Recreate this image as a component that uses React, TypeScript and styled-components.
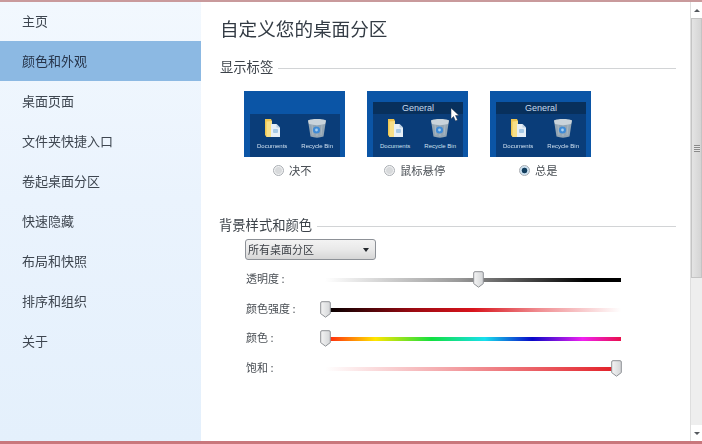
import React from "react";
import styled, { createGlobalStyle } from "styled-components";

const GlobalStyle = createGlobalStyle`
  html, body {
    margin: 0;
    padding: 0;
    background: #ffffff;
  }
  body {
    font-family: "Noto Sans CJK SC", "Liberation Sans", sans-serif;
    overflow: hidden;
  }
`;

// Whole window, with the reddish frame lines on top and bottom
const Window = styled.div`
  width: 702px;
  height: 444px;
  display: flex;
  flex-direction: column;
  overflow: hidden;
  border-top: 2px solid #c99a9c;
  border-bottom: 3px solid #c9777c;
  box-sizing: border-box;
  filter: blur(0.45px);
`;

const Body = styled.div`
  flex: 1;
  min-height: 0;
  display: flex;
`;

// Left navigation
const Sidebar = styled.nav`
  width: 201px;
  flex-shrink: 0;
  display: flex;
  flex-direction: column;
  background: linear-gradient(180deg, #f2f8fe 0%, #eaf3fd 45%, #e4f0fc 100%);
`;

const NavItem = styled.div<{ $active?: boolean }>`
  height: 40.1px;
  box-sizing: border-box;
  padding: 0 0 2px 22px;
  display: flex;
  align-items: center;
  font-size: 13px;
  color: ${(p) => (p.$active ? "#26344a" : "#3e4650")};
  background: ${(p) => (p.$active ? "#8cb9e3" : "transparent")};
  &:first-child {
    height: 39px;
    padding-bottom: 3px;
  }
`;

const Main = styled.main`
  flex: 1;
  min-width: 0;
  padding: 13px 14px 0 19px;
  display: flex;
  flex-direction: column;
`;

const Title = styled.h1`
  margin: 0;
  font-size: 18.6px;
  line-height: 25px;
  font-weight: 400;
  color: #333b44;
`;

const SectionHeading = styled.div<{ $top: number; $shift?: number }>`
  margin: ${(p) => p.$top}px 0 0 ${(p) => p.$shift ?? 0}px;
  display: flex;
  align-items: center;
  gap: 5px;
  font-size: 13.3px;
  line-height: 18px;
  color: #3c4249;
  &::after {
    content: "";
    flex: 1;
    height: 1px;
    margin-top: 3px;
    background: #d2d4d6;
  }
`;

const Previews = styled.div`
  margin: 15px 0 0 24px;
  display: flex;
  gap: 22px;
`;

const PreviewColumn = styled.div`
  width: 101px;
  display: flex;
  flex-direction: column;
`;

const Preview = styled.div`
  position: relative;
  height: 66px;
  box-sizing: border-box;
  padding: 11px 5px 0 6px;
  background: #0b55a6;
  display: flex;
  flex-direction: column;
  justify-content: flex-end;
`;

const Pointer = styled.svg`
  position: absolute;
  left: 84px;
  top: 17px;
`;

const DesktopGroup = styled.div`
  background: #0a3d79;
  display: flex;
  flex-direction: column;
  margin-top: auto;
`;

const GroupTitle = styled.div`
  height: 12px;
  line-height: 12px;
  text-align: center;
  font-family: "Liberation Sans", sans-serif;
  font-size: 9px;
  color: #c6d9ec;
  background: #08305c;
`;

const Shortcuts = styled.div`
  height: 43px;
  display: flex;
  justify-content: space-around;
  padding-top: 4px;
  box-sizing: border-box;
`;

const Shortcut = styled.div`
  display: flex;
  flex-direction: column;
  align-items: center;
  font-family: "Liberation Sans", sans-serif;
  font-size: 6px;
  line-height: 9px;
  color: #cfe0f0;
  white-space: nowrap;
  svg {
    display: block;
    margin-bottom: 4px;
  }
`;

const RadioRow = styled.div<{ $shift: number }>`
  margin: 5px 0 0 ${(p) => p.$shift}px;
  display: flex;
  align-items: center;
  gap: 5px;
  font-size: 11.3px;
  line-height: 16px;
  color: #4a4f55;
  white-space: nowrap;
`;

const Radio = styled.span<{ $checked?: boolean }>`
  width: 11px;
  height: 11px;
  border-radius: 50%;
  box-sizing: border-box;
  border: 1px solid #a9adb2;
  background: ${(p) =>
    p.$checked
      ? "radial-gradient(circle, #123e5e 0 2.5px, #cfe3f2 3.2px)"
      : "radial-gradient(circle, #d8dadc 0 3px, #f1f2f3 4px)"};
`;

const Select = styled.div`
  margin: 5px 0 0 25px;
  width: 131px;
  height: 21px;
  box-sizing: border-box;
  border: 1px solid #8d9197;
  border-radius: 3px;
  padding: 0 6px 2px 2px;
  display: flex;
  align-items: center;
  justify-content: space-between;
  font-size: 11px;
  color: #3c4046;
  background: linear-gradient(180deg, #f3f3f3 0%, #e9e9e9 50%, #d6d6d6 100%);
  &::after {
    content: "";
    margin-top: 2px;
    border-style: solid;
    border-width: 4px 3.5px 0 3.5px;
    border-color: #23272c transparent transparent transparent;
  }
`;

const Sliders = styled.div`
  margin: 5px 0 0 26px;
  display: flex;
  flex-direction: column;
`;

const SliderRow = styled.div`
  height: 29.5px;
  display: flex;
  align-items: center;
`;

const SliderLabel = styled.span`
  width: 79px;
  flex-shrink: 0;
  padding-bottom: 3px;
  font-size: 11px;
  color: #4a4f55;
  white-space: pre;
`;

const Track = styled.div<{ $fill: string }>`
  position: relative;
  width: 296px;
  height: 4px;
  margin-top: 1px;
  background: ${(p) => p.$fill};
`;

const Thumb = styled.span<{ $at: number }>`
  position: absolute;
  top: -7px;
  left: ${(p) => p.$at}px;
  svg {
    display: block;
  }
`;

// Scrollbar on the right edge
const Scrollbar = styled.div`
  width: 12px;
  flex-shrink: 0;
  display: flex;
  flex-direction: column;
  align-items: stretch;
  background: #eeeeee;
  border-left: 1px solid #dedede;
  box-sizing: border-box;
`;

const ScrollArrow = styled.div<{ $down?: boolean }>`
  height: 16px;
  display: flex;
  align-items: center;
  justify-content: center;
  background: #ffffff;
  &::after {
    content: "";
    border-style: solid;
    border-width: ${(p) => (p.$down ? "3px 3px 0 3px" : "0 3px 3px 3px")};
    border-color: ${(p) =>
      p.$down
        ? "#55595e transparent transparent transparent"
        : "transparent transparent #55595e transparent"};
  }
`;

const ScrollThumb = styled.div`
  height: 260px;
  display: flex;
  align-items: center;
  justify-content: center;
  box-sizing: border-box;
  border: 1px solid #c4c4c4;
  background: linear-gradient(90deg, #e4e4e4, #d4d4d4);
  &::after {
    content: "";
    width: 6px;
    height: 7px;
    background: repeating-linear-gradient(180deg, #8a8a8a 0 1px, #e6e6e6 1px 2px);
  }
`;

const ScrollTrack = styled.div`
  flex: 1;
`;

const FolderIcon = () => (
  <svg width="15" height="20" viewBox="0 0 15 20">
    <path d="M0 1h6l1 2v16H1.500L0 17z" fill="#efc651" />
    <path d="M1.500 3.500L7 3v16H1.500z" fill="#f7df88" />
    <path d="M6 6h5.500L15 9.500V19H6z" fill="#e6eff7" />
    <path d="M11.500 6v3.500H15z" fill="#b9cfe2" />
    <rect x="8" y="11" width="5" height="4" rx="1" fill="#a6c9e6" />
  </svg>
);

const BinIcon = () => (
  <svg width="20" height="20" viewBox="0 0 20 20">
    <path d="M1 2.500C6 .500 14 .500 19 2.500L16.500 18.500C12 20 8 20 3.500 18.500z" fill="#93a5b3" />
    <path d="M1 2.500C6 .500 14 .500 19 2.500L18 6C13 7.500 7 7.500 2 6z" fill="#c9d3da" />
    <path d="M5 7l1 10M10 7.500V18M15 7l-1 10" stroke="#aab8c3" strokeWidth="1" />
    <circle cx="9.500" cy="12" r="3.600" fill="#3f8bd6" />
    <circle cx="9.500" cy="12" r="1.400" fill="#a8d0f2" />
  </svg>
);

const ThumbIcon = () => (
  <svg width="11" height="17" viewBox="0 0 11 17">
    <defs>
      <linearGradient id="thumbFill" x1="0" y1="0" x2="1" y2="0">
        <stop offset="0" stopColor="#f4f4f4" />
        <stop offset="1" stopColor="#d4d6d8" />
      </linearGradient>
    </defs>
    <path
      d="M2 .7h7a1.300 1.300 0 0 1 1.300 1.300v10.600L5.500 16.200.7 12.600V2A1.300 1.300 0 0 1 2 .7z"
      fill="url(#thumbFill)"
      stroke="#8f9296"
    />
  </svg>
);

const navItems = [
  "主页",
  "颜色和外观",
  "桌面页面",
  "文件夹快捷入口",
  "卷起桌面分区",
  "快速隐藏",
  "布局和快照",
  "排序和组织",
  "关于",
];

const previews = [
  { label: "决不", shift: 29, title: false, checked: false, pointer: false },
  { label: "鼠标悬停", shift: 17, title: true, checked: false, pointer: true },
  { label: "总是", shift: 29, title: true, checked: true, pointer: false },
];

const sliders = [
  {
    label: "透明度 :",
    fill: "linear-gradient(90deg, #ffffff 0%, #9a9a9a 45%, #000000 88%)",
    at: 148,
  },
  {
    label: "颜色强度 :",
    fill: "linear-gradient(90deg, #000000 0%, #9c0a12 30%, #d8141c 50%, #f08c90 72%, #ffffff 100%)",
    at: -5,
  },
  {
    label: "颜色 :",
    fill: "linear-gradient(90deg, #ff1a10 0%, #ffe600 17%, #12e040 36%, #18e0ee 54%, #0808c8 70%, #f020f0 87%, #e8104c 100%)",
    at: -5,
  },
  {
    label: "饱和 :",
    fill: "linear-gradient(90deg, #ffffff 0%, #f4a9ac 40%, #e21c24 100%)",
    at: 286,
  },
];

const App: React.FC = () => {
  return (
    <Window>
      <GlobalStyle />
      <Body>
        <Sidebar>
          {navItems.map((item, i) => (
            <NavItem key={item} $active={i === 1}>
              {item}
            </NavItem>
          ))}
        </Sidebar>

        <Main>
          <Title>自定义您的桌面分区</Title>

          <SectionHeading $top={18}>显示标签</SectionHeading>
          <Previews>
            {previews.map((p) => (
              <PreviewColumn key={p.label}>
                <Preview>
                  <DesktopGroup>
                    {p.title && <GroupTitle>General</GroupTitle>}
                    <Shortcuts>
                      <Shortcut>
                        <FolderIcon />
                        Documents
                      </Shortcut>
                      <Shortcut>
                        <BinIcon />
                        Recycle Bin
                      </Shortcut>
                    </Shortcuts>
                  </DesktopGroup>
                  {p.pointer && (
                    <Pointer width="9" height="13" viewBox="0 0 9 13">
                      <path d="M0 0v11l2.500-2.500L4.500 13l2-1-2-4.500H8z" fill="#ffffff" stroke="#22334a" strokeWidth="0.5" />
                    </Pointer>
                  )}
                </Preview>
                <RadioRow $shift={p.shift}>
                  <Radio $checked={p.checked} />
                  {p.label}
                </RadioRow>
              </PreviewColumn>
            ))}
          </Previews>

          <SectionHeading $top={38} $shift={-1}>背景样式和颜色</SectionHeading>
          <Select>所有桌面分区</Select>
          <Sliders>
            {sliders.map((s) => (
              <SliderRow key={s.label}>
                <SliderLabel>{s.label}</SliderLabel>
                <Track $fill={s.fill}>
                  <Thumb $at={s.at}>
                    <ThumbIcon />
                  </Thumb>
                </Track>
              </SliderRow>
            ))}
          </Sliders>
        </Main>

        <Scrollbar>
          <ScrollArrow />
          <ScrollThumb />
          <ScrollTrack />
          <ScrollArrow $down />
        </Scrollbar>
      </Body>
    </Window>
  );
};

export default App;
